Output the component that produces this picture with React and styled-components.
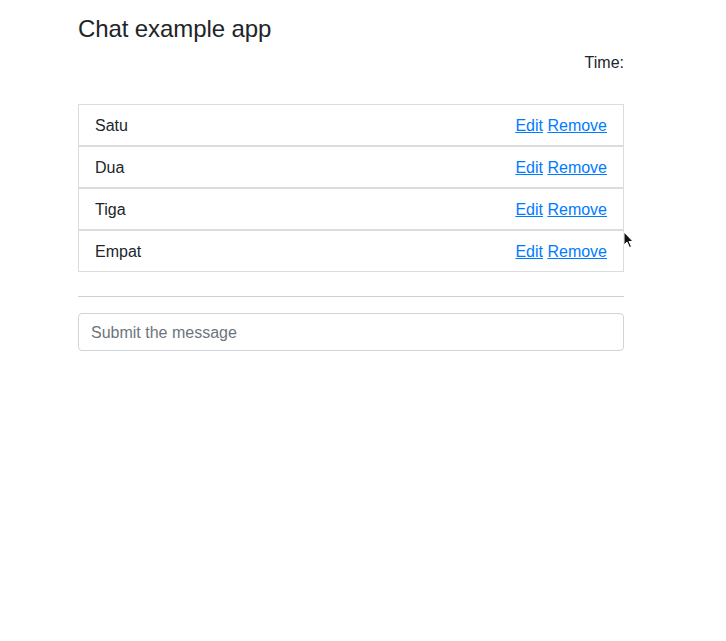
import React from "react";
import styled, { createGlobalStyle } from "styled-components";

const GlobalStyle = createGlobalStyle`
  body {
    margin: 0;
    background: #fff;
    font-family: "Liberation Sans", Arial, sans-serif;
    font-size: 16px;
    line-height: 1.5;
    color: #212529;
  }
`;

const messages = ["Satu", "Dua", "Tiga", "Empat"];

export default function App() {
  return (
    <>
      <GlobalStyle />
      <Page>
        <Title>Chat example app</Title>
        <TimeLine>Time:</TimeLine>
        <List>
          {messages.map((m) => (
            <Item key={m}>
              <span>{m}</span>
              <Actions>
                <Link href="#">Edit</Link> <Link href="#">Remove</Link>
              </Actions>
            </Item>
          ))}
        </List>
        <Rule />
        <Input placeholder="Submit the message" />
        <Cursor viewBox="0 0 12 18" width="12" height="18">
          <path
            d="M1 1 L1 14 L4 11 L6.5 16.5 L8.5 15.5 L6 10.5 L10 10.5 Z"
            fill="#111"
            stroke="#fff"
            strokeWidth="1"
          />
        </Cursor>
      </Page>
    </>
  );
}

const Page = styled.div`
  position: relative;
  width: 546px;
  margin: 0 auto 0 78px;
  padding-top: 15px;
`;

const Title = styled.h4`
  margin: 0 0 7px;
  font-size: 24px;
  font-weight: 500;
  line-height: 1.2;
  letter-spacing: -0.1px;
`;

const TimeLine = styled.p`
  margin: 0 0 29px;
  text-align: right;
`;

const List = styled.ul`
  list-style: none;
  margin: 0;
  padding: 0;
`;

const Item = styled.li`
  display: flex;
  justify-content: space-between;
  align-items: center;
  padding: 9px 16px 7px;
  border: 1px solid #dcdcdc;
`;

const Actions = styled.span`
  white-space: pre;
`;

const Link = styled.a`
  color: #007bff;
  text-decoration: underline;
`;

const Rule = styled.hr`
  margin: 24px 0 16px;
  border: 0;
  border-top: 1px solid #cfcfcf;
`;

const Input = styled.input`
  display: block;
  box-sizing: border-box;
  width: 100%;
  height: 38px;
  padding: 7px 12px 5px;
  font: inherit;
  color: #495057;
  border: 1px solid #ced4da;
  border-radius: 4px;
  &::placeholder {
    color: #6c757d;
  }
`;

const Cursor = styled.svg`
  position: absolute;
  left: 545px;
  top: 231px;
`;
